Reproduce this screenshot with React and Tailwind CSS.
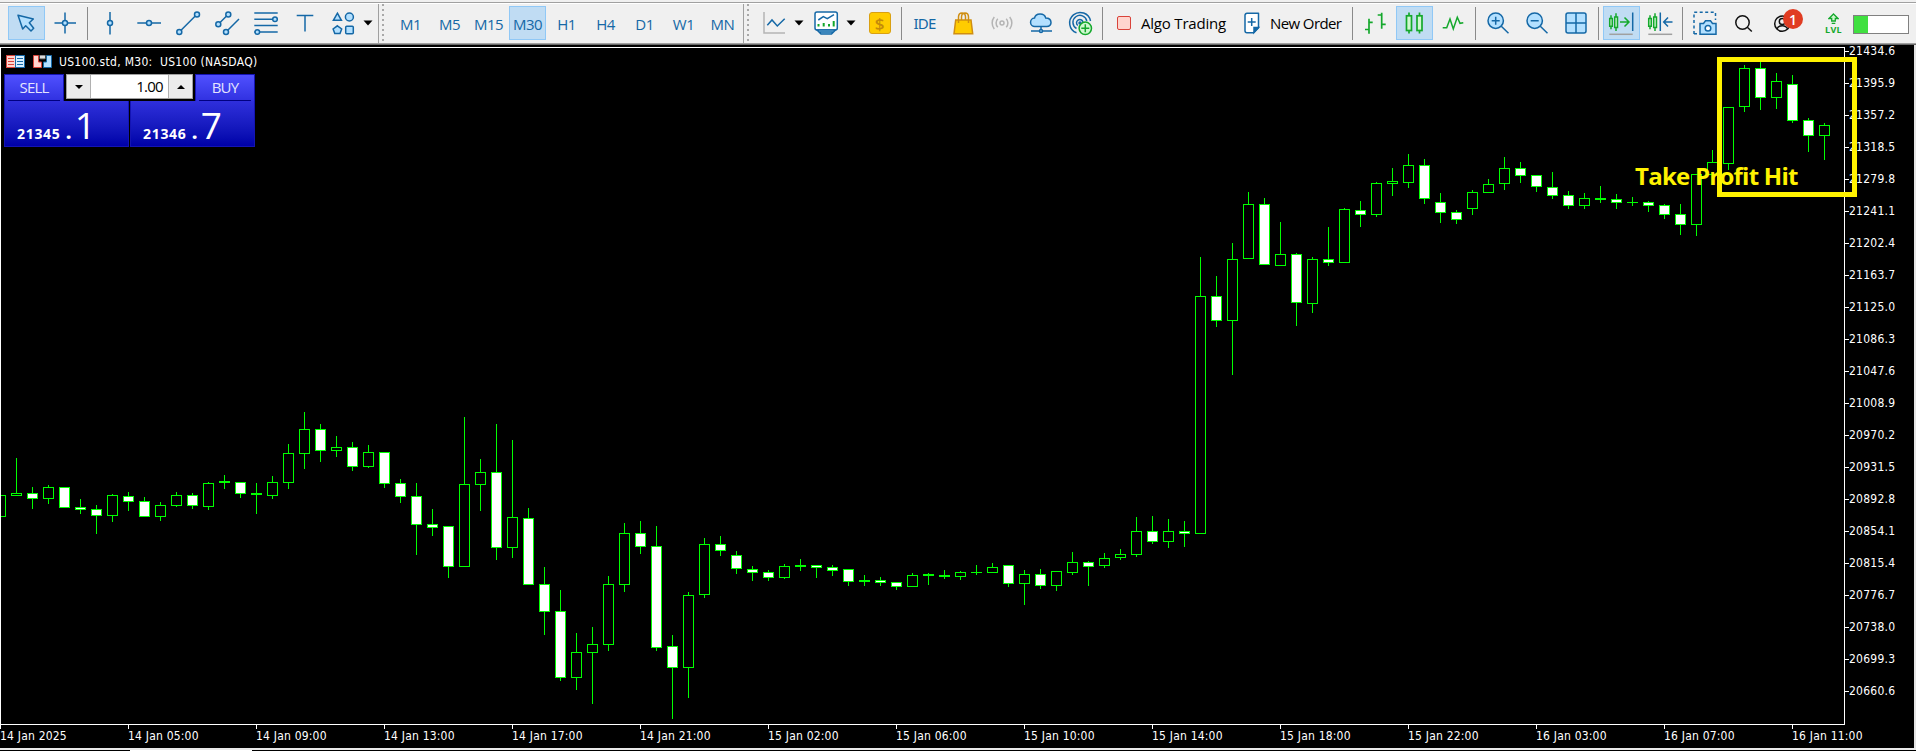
import React from "react";

// one row per bar: [high, body top, body bottom, low, type]
// type: 1 = bearish (filled), 0 = bullish (hollow)
const BARS = [
  [495, 495, 517, 517, 0], [458, 493, 496, 496, 0], [487, 493, 499, 509, 1], [485, 487, 499, 504, 0],
  [487, 487, 508, 508, 1], [499, 507, 510, 514, 1], [505, 509, 516, 534, 1], [494, 495, 516, 522, 0],
  [492, 496, 502, 511, 1], [497, 501, 517, 517, 1], [502, 505, 517, 521, 0], [492, 495, 506, 507, 0],
  [493, 495, 506, 509, 1], [482, 483, 507, 510, 0], [475, 481, 483, 489, 0], [482, 482, 494, 498, 1],
  [483, 493, 495, 514, 0], [476, 482, 496, 499, 0], [444, 453, 483, 489, 0], [412, 429, 454, 469, 0],
  [424, 429, 451, 462, 1], [436, 447, 451, 457, 0], [442, 447, 467, 471, 1], [445, 452, 467, 468, 0],
  [452, 452, 484, 488, 1], [479, 483, 497, 503, 1], [483, 496, 525, 555, 1], [509, 524, 528, 536, 1],
  [526, 526, 567, 578, 1], [417, 484, 567, 567, 0], [459, 472, 485, 511, 0], [424, 472, 548, 560, 1],
  [440, 517, 548, 558, 0], [508, 518, 585, 585, 1], [567, 584, 612, 635, 1], [590, 611, 678, 681, 1],
  [633, 652, 678, 690, 0], [627, 644, 653, 704, 0], [576, 584, 645, 651, 0], [523, 533, 585, 592, 0],
  [521, 533, 547, 554, 1], [526, 546, 648, 651, 1], [635, 646, 668, 719, 1], [592, 595, 668, 698, 0],
  [538, 544, 595, 598, 0], [536, 544, 551, 556, 1], [551, 555, 569, 574, 1], [566, 569, 573, 581, 1],
  [570, 572, 578, 581, 1], [564, 566, 578, 579, 0], [559, 565, 567, 571, 0], [565, 565, 568, 578, 1],
  [565, 567, 571, 576, 1], [569, 569, 582, 586, 1], [575, 580, 582, 586, 0], [577, 580, 583, 586, 1],
  [582, 582, 587, 590, 1], [573, 575, 587, 587, 0], [573, 574, 576, 585, 0], [570, 575, 577, 579, 0],
  [571, 572, 577, 580, 0], [565, 572, 573, 575, 0], [563, 567, 573, 573, 0], [565, 565, 584, 587, 1],
  [570, 574, 584, 605, 0], [569, 574, 586, 589, 1], [571, 571, 586, 591, 0], [552, 562, 573, 575, 0],
  [561, 562, 567, 586, 1], [553, 558, 566, 568, 0], [549, 554, 558, 560, 0], [517, 531, 555, 557, 0],
  [516, 531, 542, 544, 1], [519, 531, 542, 548, 0], [521, 531, 534, 547, 1], [257, 296, 534, 534, 0],
  [276, 296, 321, 327, 1], [243, 259, 321, 375, 0], [192, 204, 259, 259, 0], [198, 204, 265, 265, 1],
  [222, 254, 266, 266, 0], [253, 254, 303, 326, 1], [257, 259, 304, 313, 0], [227, 259, 263, 266, 1],
  [208, 209, 263, 263, 0], [201, 210, 215, 227, 1], [182, 183, 215, 217, 0], [168, 181, 184, 196, 0],
  [154, 165, 183, 188, 0], [159, 165, 199, 204, 1], [193, 202, 213, 223, 1], [210, 212, 220, 224, 1],
  [190, 192, 209, 215, 0], [179, 184, 193, 193, 0], [157, 168, 184, 190, 0], [162, 168, 176, 183, 1],
  [175, 175, 187, 192, 1], [172, 187, 196, 199, 1], [191, 195, 206, 209, 1], [193, 198, 206, 209, 0],
  [186, 198, 200, 203, 0], [194, 199, 203, 209, 1], [197, 202, 203, 206, 0], [201, 202, 206, 212, 1],
  [204, 205, 215, 219, 1], [204, 214, 225, 235, 1], [174, 174, 225, 236, 0], [150, 162, 175, 175, 0],
  [107, 107, 164, 170, 0], [65, 68, 107, 112, 0], [60, 68, 98, 110, 1], [73, 81, 98, 109, 0],
  [75, 84, 121, 123, 1], [118, 120, 136, 152, 1], [123, 125, 136, 160, 0],
];

const PRICES = [
  "21434.6", "21395.9", "21357.2", "21318.5", "21279.8", "21241.1", "21202.4",
  "21163.7", "21125.0", "21086.3", "21047.6", "21008.9", "20970.2", "20931.5",
  "20892.8", "20854.1", "20815.4", "20776.7", "20738.0", "20699.3", "20660.6",
];

const TIMES = [
  "14 Jan 2025", "14 Jan 05:00", "14 Jan 09:00", "14 Jan 13:00", "14 Jan 17:00",
  "14 Jan 21:00", "15 Jan 02:00", "15 Jan 06:00", "15 Jan 10:00", "15 Jan 14:00",
  "15 Jan 18:00", "15 Jan 22:00", "16 Jan 03:00", "16 Jan 07:00", "16 Jan 11:00",
];

const TIMEFRAMES = ["M1", "M5", "M15", "M30", "H1", "H4", "D1", "W1", "MN"];

const BLUE = "#1568a6";
const SKY = "#b3e0ff";
const GREEN = "#14a82c";

const Icon = ({ children, color = BLUE, fill = "none", width = 1.5 }) => (
  <svg width="25" height="24" viewBox="0 0 25 24" fill={fill} stroke={color} strokeWidth={width} className="shrink-0 overflow-visible">
    {children}
  </svg>
);

const ToolButton = ({ children, active }) => (
  <button
    className={
      active
        ? "mx-px flex h-[34px] w-[37px] shrink-0 items-center justify-center border border-[#90c8f6] bg-[#c0dcf3]"
        : "mx-px flex h-[34px] w-[37px] shrink-0 items-center justify-center"
    }
  >
    {children}
  </button>
);

const Separator = ({ tight }) => (
  <div
    className={
      tight
        ? "mr-[2px] ml-[2px] h-[33px] w-px shrink-0 bg-[#8a8a8a]"
        : "mr-[3px] ml-[2px] h-[33px] w-px shrink-0 bg-[#8a8a8a]"
    }
  />
);

const Grip = () => (
  <div className="flex h-[39px] shrink-0 items-center">
    <div className="h-full w-px bg-[#a0a0a0]" />
    <div className="ml-[3px] h-full w-[2px] bg-[repeating-linear-gradient(#a8a8a8_0_2px,transparent_2px_5px)]" />
  </div>
);

const Caret = () => (
  <svg width="10" height="6" viewBox="0 0 10 6" className="shrink-0">
    <path d="M0.5 0.5h9L5 5.5z" fill="#000" />
  </svg>
);

const DrawingTools = () => (
  <div className="flex w-[371px] shrink-0 items-center">
    <ToolButton active>
      <Icon fill={SKY}>
        <path d="M4 4.3 19.3 8l-4 3.7 4.4 5.6L17 20l-5.3-5.3-3 3.3z" strokeLinejoin="round" />
      </Icon>
    </ToolButton>
    <ToolButton>
      <Icon fill={SKY}>
        <path d="M12 1.5v21M1.5 12H23" />
        <circle cx="12" cy="12" r="2.5" />
      </Icon>
    </ToolButton>
    <Separator tight />
    <ToolButton>
      <Icon fill={SKY}>
        <path d="M13 1v22.5" />
        <circle cx="13" cy="12" r="2.5" />
      </Icon>
    </ToolButton>
    <ToolButton>
      <Icon fill={SKY}>
        <path d="M1.3 12H25" />
        <circle cx="13" cy="12" r="2.5" />
      </Icon>
    </ToolButton>
    <ToolButton>
      <Icon fill={SKY}>
        <path d="M4.3 21 22 3.3" />
        <circle cx="22" cy="3.5" r="2.5" />
        <circle cx="4.3" cy="21" r="2.5" />
      </Icon>
    </ToolButton>
    <ToolButton>
      <Icon fill={SKY}>
        <path d="M4.3 13.3l10-10M12 21 25 8" />
        <circle cx="14.3" cy="3.5" r="2.5" />
        <circle cx="4.3" cy="13.3" r="2.5" />
        <circle cx="12" cy="21" r="2.5" />
      </Icon>
    </ToolButton>
    <ToolButton>
      <Icon fill={SKY}>
        <path d="M1.3 2h23.4M1.3 8.3h23.4M1.3 14.6h23.4M1.3 21h23.4" />
        <circle cx="22" cy="8.3" r="2.3" />
        <circle cx="4.3" cy="21" r="2.3" />
      </Icon>
    </ToolButton>
    <ToolButton>
      <Icon>
        <path d="M4.7 4.6h16.6M13 4.6v15.9" />
      </Icon>
    </ToolButton>
    <ToolButton>
      <Icon fill={SKY}>
        <path d="M6.4 2.2 10.4 9.3h-8z" />
        <circle cx="18.4" cy="6" r="4" />
        <path d="M6.4 14.8l4.3 3.2-1.7 4.5H3.8L2.1 18z" />
        <rect x="14.7" y="15.2" width="7.6" height="7.5" rx="1" />
      </Icon>
    </ToolButton>
    <Caret />
  </div>
);

const Timeframes = () => (
  <div className="flex shrink-0 items-center">
    {TIMEFRAMES.map((tf) => (
      <ToolButton key={tf} active={tf === "M30"}>
        <span className="mt-[3px] text-[15px] tracking-[-0.5px] text-[#1568a6]">{tf}</span>
      </ToolButton>
    ))}
  </div>
);

const ChartTools = () => (
  <div className="flex shrink-0 items-center">
    <ToolButton>
      <Icon>
        <path d="M2 1v21h21" stroke="#b4b4b4" />
        <path d="M5.3 14.3 10 9l5.3 6 7.4-7.3" />
      </Icon>
    </ToolButton>
    <Caret />
    <div className="w-[3px] shrink-0" />
    <ToolButton>
      <Icon>
        <rect x="1" y="1" width="22.3" height="18" rx="2" fill="#fff" />
        <path d="M3 19l4 4h10.5l4-4zM5 21h14.5" fill={SKY} />
        <path d="M4.3 9l5-3.3 4 2L20 3.7" />
        <path d="M4.5 13v2.5M9.7 12v3.5M15 13v2.5M19.7 10v5.5" stroke={GREEN} strokeWidth="2" />
      </Icon>
    </ToolButton>
    <Caret />
    <div className="w-[4px] shrink-0" />
    <ToolButton>
      <div className="flex h-[22px] w-[22px] items-center justify-center rounded-[3px] border-[1.5px] border-[#d9a012] bg-[#ffcc00] text-[17px] leading-none font-semibold text-[#c48a0a]">
        $
      </div>
    </ToolButton>
  </div>
);

const ServiceTools = () => (
  <div className="flex shrink-0 items-center">
    <ToolButton>
      <span className="font-['Noto_Sans'] text-[15px] tracking-[-0.8px] text-[#1568a6]">IDE</span>
    </ToolButton>
    <ToolButton>
      <Icon color="#cf8e12">
        <path d="M4.7 9H20l1.7 13.7H3z" fill="#ffcc00" />
        <path d="M7.5 12V6c0-5.5 7-5.5 7 0v3M10.5 9V6c0-5.5 7-5.5 7 0v6" />
      </Icon>
    </ToolButton>
    <ToolButton>
      <Icon color="#b4b4b4">
        <circle cx="12" cy="12" r="2" />
        <path d="M7.8 7.8a6 6 0 0 0 0 8.4M16.2 7.8a6 6 0 0 1 0 8.4M4.300 6a9.500 9.500 0 0 0 0 12M19.700 6a9.500 9.500 0 0 1 0 12" />
      </Icon>
    </ToolButton>
    <ToolButton>
      <Icon fill={SKY}>
        <path d="M6 15.500a4.200 4.200 0 0 1-.5-8.400c1-5.500 10-5.500 11.200-.2 6.800 0 7 8.600 1 8.600z" />
        <path d="M12 15.500v3M2 20h21" />
        <circle cx="12" cy="20" r="1.500" />
      </Icon>
    </ToolButton>
    <ToolButton>
      <Icon>
        <path d="M8.500 21.800A10.500 10.500 0 1 1 22.500 10M8.500 17.500A7 7 0 1 1 18.800 10M9.800 14.500A3.300 3.300 0 1 1 15 11" />
        <circle cx="12" cy="12" r="1" fill={BLUE} />
        <circle cx="17.300" cy="17.300" r="6.200" fill="#d0f8d0" stroke={GREEN} />
        <path d="M17.300 13.300v8M13.300 17.300h8" stroke={GREEN} />
      </Icon>
    </ToolButton>
  </div>
);

const TradeButtons = () => (
  <div className="flex w-[245px] shrink-0 items-center text-[15px] text-black">
    <div className="ml-[12px] h-[14px] w-[14px] shrink-0 rounded-[2px] border-[1.5px] border-[#d9433a] bg-[#ffd5ce]" />
    <span className="ml-[10px] w-[92px] shrink-0 tracking-[-0.2px] whitespace-nowrap">Algo Trading</span>
    <div className="ml-[9px] flex w-[28px] shrink-0">
      <Icon>
        <path d="M5 2.300h11.500v14.500l-5 5H5a2 2 0 0 1-2-2V4.300a2 2 0 0 1 2-2z" fill="#fff" strokeLinejoin="round" />
        <path d="M16.500 16.500h-4.500v5z" fill={BLUE} />
        <path d="M9.700 7v8M5.700 11h8" />
      </Icon>
    </div>
    <span className="shrink-0 tracking-[-0.6px] whitespace-nowrap">New Order</span>
  </div>
);

const ViewTools = () => (
  <div className="flex shrink-0 items-center">
    <ToolButton>
      <Icon color={GREEN} width={1.7}>
        <path d="M6 7.700v15M2 18.500h4M6 11.300h3.700M18.700 1.700v16M14.700 4h4M18.700 13.300h4" />
      </Icon>
    </ToolButton>
    <ToolButton active>
      <Icon color={GREEN} fill="#d0f8d0" width={1.7}>
        <path d="M7 1.500v21M17.500 1.500v21" />
        <rect x="4.500" y="4.800" width="5" height="14.700" />
        <rect x="15" y="4.800" width="5" height="14.700" />
      </Icon>
    </ToolButton>
    <ToolButton>
      <Icon color={GREEN}>
        <path d="M1.700 16.700h4L9 8l3.300 10 4-11.700 2.700 6 3.300-.6" />
      </Icon>
    </ToolButton>
    <Separator />
    <ToolButton>
      <Icon fill={SKY}>
        <circle cx="9.700" cy="9.700" r="7.700" />
        <path d="M9.700 5.700v8M5.700 9.700h8M15.300 15.300l7.200 7" />
      </Icon>
    </ToolButton>
    <ToolButton>
      <Icon fill={SKY}>
        <circle cx="9.700" cy="9.700" r="7.700" />
        <path d="M5.700 9.700h8M15.300 15.300l7.200 7" />
      </Icon>
    </ToolButton>
    <ToolButton>
      <Icon fill={SKY}>
        <rect x="2" y="2" width="20" height="20" rx="2" />
        <path d="M12 2v20M2 12h20" />
      </Icon>
    </ToolButton>
    <Separator />
    <ToolButton active>
      <Icon color={GREEN} fill="#d0f8d0">
        <path d="M2 4.300v14M7 2.300V20" />
        <path d="M.7 7.500h2.600v7.700H.7zM5.700 6h2.800v10.500H5.700z" />
        <path d="M11 11h8.500M15.500 6.500 20 11l-4.500 4.500" fill="none" />
        <path d="M23.700 1.500V20" stroke={BLUE} />
        <path d="M.3 23.300h23.400" stroke="#a0a0a0" />
      </Icon>
    </ToolButton>
    <ToolButton>
      <Icon color={GREEN} fill="#d0f8d0">
        <path d="M2 4.300v14M7 2.300V20" />
        <path d="M.7 7.500h2.600v7.700H.7zM5.700 6h2.800v10.500H5.700z" />
        <path d="M12.300 1.500V20" stroke={BLUE} />
        <path d="M24.500 11H16M20 6.500 15.700 11l4.300 4.500" fill="none" stroke={BLUE} />
        <path d="M.3 23.300h23.900" stroke="#a0a0a0" />
      </Icon>
    </ToolButton>
    <Separator tight />
  </div>
);

const AccountTools = () => (
  <div className="flex shrink-0 items-center">
    <ToolButton>
      <Icon>
        <path d="M2 23V1.200h21.500V9M2 22.700h4" strokeDasharray="3 2.500" />
        <path d="M8 12.500h3.500l2-2.700h5l2 2.700H24v10.800H8z" fill={SKY} />
        <circle cx="16" cy="17.300" r="2.800" fill="#fff" />
      </Icon>
    </ToolButton>
    <ToolButton>
      <Icon color="#111">
        <circle cx="11.500" cy="11.500" r="6.700" />
        <path d="M16.300 16.300l4.500 4.200" />
      </Icon>
    </ToolButton>
    <div className="relative">
      <ToolButton>
        <Icon color="#111">
          <circle cx="12.300" cy="12.700" r="7.600" />
          <circle cx="12.300" cy="10.500" r="3" />
          <path d="M7 18c1.500-4.500 9-4.500 10.600 0" />
        </Icon>
      </ToolButton>
      <span className="absolute top-[3px] left-[20px] flex h-5 w-5 items-center justify-center rounded-full bg-[#e03c22] text-[14px] font-semibold text-white">
        1
      </span>
    </div>
    <div className="ml-[12px] flex w-[39px] shrink-0 flex-col items-center pt-[2px]">
      <svg width="11" height="12" viewBox="0 0 11 12" fill="#d0f8d0" stroke={GREEN} strokeWidth="1.300">
        <path d="M5.500 1 10 5.500H7.300V8H3.700V5.500H1zM3.700 10.300h3.600" />
      </svg>
      <span className="text-[9px] leading-[10px] font-bold tracking-[0.3px] text-[#14a82c]">LVL</span>
    </div>
    <div className="mt-[2px] h-[19px] w-[56px] shrink-0 border border-[#808080] bg-white">
      <div className="h-full w-[14px] bg-[#40e040]" />
    </div>
  </div>
);

const Toolbar = () => (
  <header className="flex h-[45px] flex-col bg-[#f0f0f0]">
    <div className="h-[2px] shrink-0" />
    <div className="h-px shrink-0 bg-[#a0a0a0]" />
    <div className="h-px shrink-0 bg-white" />
    <div className="flex h-[39px] shrink-0 items-center pb-px pl-[7px]">
      <DrawingTools />
      <Grip />
      <div className="w-[7px] shrink-0" />
      <Timeframes />
      <div className="w-px shrink-0" />
      <Grip />
      <div className="w-[6px] shrink-0" />
      <ChartTools />
      <Separator />
      <ServiceTools />
      <Separator tight />
      <TradeButtons />
      <Separator />
      <ViewTools />
      <AccountTools />
    </div>
    <div className="h-px shrink-0 bg-[#a0a0a0]" />
    <div className="h-px shrink-0 bg-[#696969]" />
  </header>
);

const Bar = ({ index, bar }) => {
  const [high, top, bottom, low, filled] = bar;
  const x = index * 16;
  const height = bottom - top;
  return (
    <g>
      <rect x={x} y={high} width="1" height={low - high} fill="#0f0" />
      <rect x={x - 5} y={top} width="11" height={height} fill="#0f0" />
      {height > 2 && (
        <rect x={x - 4} y={top + 1} width="9" height={height - 2} fill={filled ? "#fff" : "#000"} />
      )}
    </g>
  );
};

const Plot = () => (
  <svg width="1845" height="684" viewBox="0 45 1845 684" shapeRendering="crispEdges" className="block shrink-0">
    {BARS.map((bar, i) => (
      <Bar key={i} index={i} bar={bar} />
    ))}
    <path d="M0 47h1845v678H0zM1 48v676h1843V48z" fill="#fff" fillRule="evenodd" />
    {TIMES.map((t, i) => (
      <rect key={t} x={i * 128} y="725" width="1" height="4" fill="#fff" />
    ))}
  </svg>
);

const PriceAxis = () => (
  <div className="flex flex-col gap-[19px]">
    {PRICES.map((price) => (
      <div key={price} className="flex h-[13px] items-center">
        <div className="h-px w-[4px] bg-white" />
        <span className="font-['DejaVu_Sans_Condensed','DejaVu_Sans',sans-serif] text-[12px] leading-[13px] tracking-[0.25px] text-white [font-stretch:condensed]">
          {price}
        </span>
      </div>
    ))}
  </div>
);

const TimeAxis = () => (
  <div className="flex h-[19px] shrink-0">
    {TIMES.map((time) => (
      <span
        key={time}
        className="w-[128px] shrink-0 font-['DejaVu_Sans_Condensed','DejaVu_Sans',sans-serif] text-[12px] leading-[14px] tracking-[0.2px] whitespace-nowrap text-white [font-stretch:condensed]"
      >
        {time}
      </span>
    ))}
  </div>
);

const ChartTitle = () => (
  <div className="flex h-[14px] items-center">
    <svg width="19" height="13" viewBox="0 0 19 13">
      <rect width="19" height="13" rx="1" fill="#fff" />
      <rect x="0.500" y="0.500" width="9" height="12" fill="#ffd5ce" stroke="#d9433a" />
      <rect x="9.500" y="0.500" width="9" height="12" fill="#d5eeff" stroke={BLUE} />
      <path d="M2 3.500h6M2 6.500h6M2 9.500h6" stroke="#d9433a" />
      <path d="M11 3.500h6M11 6.500h6M11 9.500h6" stroke={BLUE} />
    </svg>
    <svg width="19" height="13" viewBox="0 0 19 13" className="ml-[8px]">
      <path d="M.5.5h5V7h3v5.500h-8z" fill="#ffd5ce" stroke="#d9433a" />
      <path d="M18.500.5h-5V7h-3v5.500h8z" fill="#b3e0ff" stroke={BLUE} />
      <rect x="6.500" y="0" width="6" height="4" rx="1" fill="#ddd" stroke="#444" />
    </svg>
    <span className="mt-[2px] ml-[7px] font-['DejaVu_Sans_Condensed','DejaVu_Sans',sans-serif] text-[12px] leading-[14px] tracking-[0.3px] whitespace-pre text-white [font-stretch:condensed]">
      {"US100.std, M30:  US100 (NASDAQ)"}
    </span>
  </div>
);

const SideButton = ({ label }) => (
  <div className="flex w-[60px] flex-col items-center border border-b-0 border-[#1414b4] bg-linear-to-b from-[#5050ff] to-[#3030e0] text-[15px] text-[#e4e4ff]">
    <span className="h-[25px] leading-[25px] tracking-[-0.8px]">{label}</span>
    <div className="h-px w-[52px] shrink-0 bg-[#000080]" />
  </div>
);

const Quote = ({ whole, fraction }) => (
  <div className="flex h-[46px] w-[125px] items-baseline border border-t-0 border-[#1414b4] bg-linear-to-b from-[#2f2fdc] to-[#0000a8] pl-[12px] text-white">
    <span className="text-[14px] leading-[40px] font-bold tracking-[0.7px]">{whole}</span>
    <span className="ml-[5px] text-[22px] leading-[40px] font-bold">.</span>
    <span className="ml-[3px] text-[37px] leading-[47px]">{fraction}</span>
  </div>
);

const TradePanel = () => (
  <div className="mt-[6px] flex w-[251px] flex-col">
    <div className="flex h-[27px]">
      <SideButton label="SELL" />
      <div className="ml-[2px] flex h-[25px] w-[127px] border border-[#a0a0a0] bg-white">
        <div className="flex w-[24px] items-center justify-center border-r border-[#b0b0b0] bg-[#ececec]">
          <svg width="8" height="4" viewBox="0 0 8 4"><path d="M0 0h8L4 4z" /></svg>
        </div>
        <span className="flex-1 pr-[5px] text-right text-[15px] leading-[22px] tracking-[-0.7px] text-black">1.00</span>
        <div className="flex w-[24px] items-center justify-center border-l border-[#b0b0b0] bg-[#ececec]">
          <svg width="8" height="4" viewBox="0 0 8 4"><path d="M0 4h8L4 0z" /></svg>
        </div>
      </div>
      <div className="w-[2px]" />
      <SideButton label="BUY" />
    </div>
    <div className="flex gap-px">
      <Quote whole="21345" fraction="1" />
      <Quote whole="21346" fraction="7" />
    </div>
  </div>
);

const App = () => {
  return (
    <div className="h-[751px] w-[1916px] overflow-hidden bg-black font-['Open_Sans','Noto_Sans',sans-serif]">
      <Toolbar />
      <main className="relative flex h-[703px] border-r-2 border-[#e3e3e3] bg-black">
        <div className="flex w-[1845px] shrink-0 flex-col">
          <Plot />
          <TimeAxis />
        </div>
        <PriceAxis />
        <div className="absolute top-[9px] left-[4px] pl-[2px]">
          <ChartTitle />
          <div className="-ml-[2px]">
            <TradePanel />
          </div>
        </div>
        <div className="absolute top-[12px] left-[1717px] h-[140px] w-[140px] border-5 border-[#fff200]" />
        <span className="absolute top-[114px] left-[1635px] text-[24px] leading-[34px] font-bold tracking-[-0.75px] whitespace-nowrap text-[#fff200]">
          Take Profit Hit
        </span>
      </main>
      <footer className="flex h-[3px] flex-col">
        <div className="h-[2px] bg-[#e9e9e9]" />
        <div className="ml-[130px] h-px w-[122px] bg-white" />
      </footer>
    </div>
  );
};

export default App;
